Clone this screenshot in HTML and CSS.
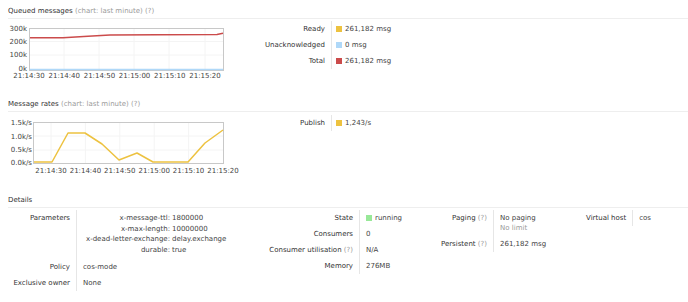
FILE: index.html
```html
<!DOCTYPE html>
<html>
<head>
<meta charset="utf-8">
<link rel="stylesheet" href="styles.css">
</head>
<body>
<section class="panel">
  <h2 class="head">Queued messages <span class="muted">(chart: last minute) (?)</span></h2>
  <div class="row">
    <svg class="chart" width="240" height="60" viewBox="0 0 240 60">
      <g class="grid">
        <line x1="56" y1="6" x2="56" y2="48"/><line x1="91" y1="6" x2="91" y2="48"/>
        <line x1="126" y1="6" x2="126" y2="48"/><line x1="161" y1="6" x2="161" y2="48"/>
        <line x1="197" y1="6" x2="197" y2="48"/>
        <line x1="21" y1="19.5" x2="215" y2="19.5"/><line x1="21" y1="33" x2="215" y2="33"/>
      </g>
      <rect class="frame" x="21.5" y="6.5" width="194" height="42"/>
      <g class="ylab" text-anchor="end">
        <text x="19" y="9">300k</text><text x="19" y="22">200k</text>
        <text x="19" y="35">100k</text><text x="19" y="49">0k</text>
      </g>
      <g class="xlab" text-anchor="middle">
        <text x="21" y="56">21:14:30</text><text x="56.2" y="56">21:14:40</text>
        <text x="91.4" y="56">21:14:50</text><text x="126.6" y="56">21:15:00</text>
        <text x="161.8" y="56">21:15:10</text><text x="197" y="56">21:15:20</text>
      </g>
      <polyline class="ln-blue" points="22,47.5 215,47.5"/>
      <polyline class="ln-red" points="22,15.7 55,15.7 80,14.3 102,13 150,12.7 209,12.5 215,11.3"/>
    </svg>
    <div class="legend">
      <div class="lab">Ready</div><div class="val"><i class="sw sw-ready"></i>261,182 msg</div>
      <div class="lab">Unacknowledged</div><div class="val"><i class="sw sw-unack"></i>0 msg</div>
      <div class="lab">Total</div><div class="val"><i class="sw sw-total"></i>261,182 msg</div>
    </div>
  </div>
</section>

<section class="panel">
  <h2 class="head">Message rates <span class="muted">(chart: last minute) (?)</span></h2>
  <div class="row">
    <svg class="chart" width="240" height="62" viewBox="0 0 240 62">
      <g class="grid">
        <line x1="43" y1="6" x2="43" y2="47"/><line x1="77.4" y1="6" x2="77.4" y2="47"/>
        <line x1="111.8" y1="6" x2="111.8" y2="47"/><line x1="146.2" y1="6" x2="146.2" y2="47"/>
        <line x1="180.6" y1="6" x2="180.6" y2="47"/>
        <line x1="25" y1="20" x2="215" y2="20"/><line x1="25" y1="34" x2="215" y2="34"/>
      </g>
      <rect class="frame" x="25.5" y="6.5" width="190" height="41"/>
      <g class="ylab" text-anchor="end">
        <text x="24" y="9">1.5k/s</text><text x="24" y="22.5">1.0k/s</text>
        <text x="24" y="36">0.5k/s</text><text x="24" y="49">0.0k/s</text>
      </g>
      <g class="xlab" text-anchor="middle">
        <text x="43" y="57">21:14:30</text><text x="77.4" y="57">21:14:40</text>
        <text x="111.8" y="57">21:14:50</text><text x="146.2" y="57">21:15:00</text>
        <text x="180.6" y="57">21:15:10</text><text x="215" y="57">21:15:20</text>
      </g>
      <polyline class="ln-yellow" points="26,46 44,46 60,17 77,17 94,28 111,44 129,37 145,46 180,46 197,27 215,14"/>
    </svg>
    <div class="legend">
      <div class="lab">Publish</div><div class="val"><i class="sw sw-ready"></i>1,243/s</div>
    </div>
  </div>
</section>

<section class="panel">
  <h2 class="head">Details</h2>
  <div class="details">
    <div class="grp grp1">
      <div class="lab">Parameters</div>
      <div class="val">
        <div class="params">
          <span class="pk">x-message-ttl:</span><span class="pv">1800000</span>
          <span class="pk">x-max-length:</span><span class="pv">10000000</span>
          <span class="pk">x-dead-letter-exchange:</span><span class="pv">delay.exchange</span>
          <span class="pk">durable:</span><span class="pv">true</span>
        </div>
      </div>
      <div class="lab">Policy</div><div class="val">cos-mode</div>
      <div class="lab">Exclusive owner</div><div class="val">None</div>
    </div>
    <div class="grp grp2">
      <div class="lab">State</div><div class="val"><i class="sw sw-run"></i>running</div>
      <div class="lab">Consumers</div><div class="val">0</div>
      <div class="lab">Consumer utilisation <span class="muted">(?)</span></div><div class="val">N/A</div>
      <div class="lab">Memory</div><div class="val">276MB</div>
    </div>
    <div class="grp grp3">
      <div class="lab">Paging <span class="muted">(?)</span></div><div class="val">No paging<br><span class="muted">No limit</span></div>
      <div class="lab">Persistent <span class="muted">(?)</span></div><div class="val">261,182 msg</div>
    </div>
    <div class="grp grp4">
      <div class="lab">Virtual host</div><div class="val">cos</div>
    </div>
  </div>
</section>
</body>
</html>
```

FILE: styles.css
```css
html, body {
  margin: 0;
  padding: 0;
  background: #fff;
}
body {
  font-family: "DejaVu Sans", Verdana, sans-serif;
  font-size: 7px;
  color: #444;
}
.panel {
  margin: 0 0 0 8px;
}
.head {
  margin: 0;
  font-size: 7px;
  font-weight: normal;
  color: #333;
  line-height: 10px;
  padding: 6px 0 2px 0;
  border-bottom: 1px solid #eeeeee;
}
.muted {
  color: #9a9a9a;
}
.row {
  display: flex;
  align-items: flex-start;
  margin-top: 3px;
  margin-bottom: 11px;
}
.panel + .panel .row {
  margin-top: 4px;
}
.chart {
  display: block;
  flex: none;
}
.chart text {
  font-family: "DejaVu Sans", Verdana, sans-serif;
  font-size: 7px;
  fill: #444;
}
.grid line {
  stroke: #f4f4f4;
  stroke-width: 1;
}
.frame {
  fill: none;
  stroke: #c8c8c8;
  stroke-width: 1;
}
.ln-red { fill: none; stroke: #cb4b4b; stroke-width: 1.5; }
.ln-blue { fill: none; stroke: #afd8f8; stroke-width: 1.5; }
.ln-yellow { fill: none; stroke: #edc240; stroke-width: 1.5; stroke-linejoin: round; }

.legend {
  display: grid;
  grid-template-columns: 82px auto;
  margin-left: 2px;
  margin-top: -1px;
  line-height: 10px;
  white-space: nowrap;
}
.legend .lab {
  text-align: right;
  padding: 3px 6px 3px 0;
  border-right: 1px solid #e6e6e6;
  color: #333;
}
.legend .val {
  padding: 3px 0 3px 4px;
}
.sw {
  display: inline-block;
  width: 6px;
  height: 6px;
  margin-right: 3px;
  vertical-align: -0.5px;
}
.sw-ready { background: #edc240; }
.sw-unack { background: #afd8f8; }
.sw-total { background: #cb4b4b; }
.sw-run { background: #98e898; }

.details {
  display: flex;
  align-items: flex-start;
  margin-top: 2px;
  line-height: 10px;
  white-space: nowrap;
}
.grp {
  display: grid;
  flex: none;
}
.grp .lab {
  text-align: right;
  color: #333;
  padding: 3px 6px 3px 0;
  border-right: 1px solid #e6e6e6;
}
.grp .val {
  padding: 3px 0 3px 6px;
}
.grp1 { width: 260px; grid-template-columns: 69px auto; }
.grp2 { width: 172px; grid-template-columns: 92px auto; }
.grp3 { width: 146px; grid-template-columns: 54px auto; }
.grp4 { grid-template-columns: max-content auto; }

.params {
  display: grid;
  grid-template-columns: 87px auto;
  column-gap: 2px;
  line-height: 10.7px;
}
.pk {
  text-align: right;
}
```
